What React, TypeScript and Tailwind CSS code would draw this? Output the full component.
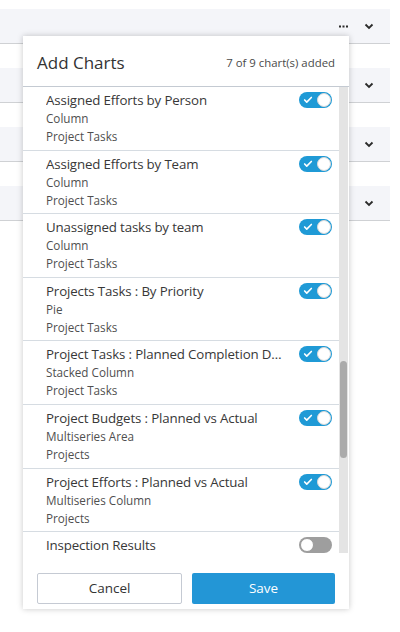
import { Check } from "lucide-react";

type ChartItem = {
  title: string;
  type?: string;
  source?: string;
  added: boolean;
};

const charts: ChartItem[] = [
  { title: "Assigned Efforts by Person", type: "Column", source: "Project Tasks", added: true },
  { title: "Assigned Efforts by Team", type: "Column", source: "Project Tasks", added: true },
  { title: "Unassigned tasks by team", type: "Column", source: "Project Tasks", added: true },
  { title: "Projects Tasks : By Priority", type: "Pie", source: "Project Tasks", added: true },
  { title: "Project Tasks : Planned Completion Date", type: "Stacked Column", source: "Project Tasks", added: true },
  { title: "Project Budgets : Planned vs Actual", type: "Multiseries Area", source: "Projects", added: true },
  { title: "Project Efforts : Planned vs Actual", type: "Multiseries Column", source: "Projects", added: true },
  { title: "Inspection Results", added: false },
];

function Chevron() {
  return (
    <svg width="10" height="7" viewBox="0 0 10 7" fill="none">
      <path d="M1.5 1.5 5 5l3.5-3.5" stroke="#2b2b2b" strokeWidth="1.8" />
    </svg>
  );
}

function Dots() {
  return (
    <svg width="9" height="3" viewBox="0 0 9 3">
      <rect x="0" y="0.5" width="2" height="2" fill="#2b2b2b" />
      <rect x="3.5" y="0.5" width="2" height="2" fill="#2b2b2b" />
      <rect x="7" y="0.5" width="2" height="2" fill="#2b2b2b" />
    </svg>
  );
}

function Toggle({ on }: { on: boolean }) {
  if (on) {
    return (
      <div className="relative w-[33px] h-[16px] rounded-full bg-[#1f9ad6] shrink-0">
        <Check
          size={10}
          strokeWidth={4}
          color="#ffffff"
          className="absolute left-[4px] top-[3px]"
        />
        <div className="absolute right-[1px] top-[1px] w-[14px] h-[14px] rounded-full bg-white border border-[#d8d8d8]" />
      </div>
    );
  }
  return (
    <div className="relative w-[33px] h-[16px] rounded-full bg-[#9e9e9e] shrink-0">
      <div className="absolute left-[1px] top-[1px] w-[14px] h-[14px] rounded-full bg-white border border-[#9a9a9a]" />
    </div>
  );
}

export default function App() {
  return (
    <div
      className="relative w-[400px] h-[632px] bg-white overflow-hidden"
      style={{ fontFamily: '"Open Sans", "Noto Sans", sans-serif' }}
    >
      {/* Background sections */}
      <div className="flex flex-col gap-[24px] pt-[9px]">
        {[0, 1, 2, 3].map((i) => (
          <div
            key={i}
            className="w-[390px] h-[35px] bg-[#f4f5f9] border-b border-[#cfd1d4] flex items-center justify-end pr-[16px] gap-[16px]"
          >
            {i === 0 && <Dots />}
            <Chevron />
          </div>
        ))}
      </div>

      {/* Add Charts popover */}
      <div className="absolute left-[23px] top-[36px] w-[326px] h-[573px] bg-white shadow-[0_0_6px_rgba(0,0,0,0.22)] flex flex-col">
        <div className="h-[51px] shrink-0 border-b border-[#c4cad2] flex items-center justify-between pl-[14px] pr-[14px] pt-[4px]">
          <span className="text-[17px] text-[#333333]">Add Charts</span>
          <span className="text-[11.4px] text-[#4a4a4a]">7 of 9 chart(s) added</span>
        </div>

        <div className="relative h-[466px] shrink-0 overflow-hidden flex">
          <div className="flex-1 min-w-0 flex flex-col">
            {charts.map((c, i) => (
              <div
                key={c.title}
                className={`flex justify-between pl-[23px] pr-[7px] pt-[4px] pb-[4.6px] ${
                  i < charts.length - 1 ? "border-b border-[#d6dce2]" : ""
                }`}
              >
                <div className="min-w-0 flex-1 pr-[12px]">
                  <div className="text-[13.3px] leading-[18px] text-[#383838] tracking-[-0.15px] truncate">
                    {c.title}
                  </div>
                  {c.type && (
                    <div className="text-[11.7px] leading-[18px] text-[#4f4f4f]">{c.type}</div>
                  )}
                  {c.source && (
                    <div className="text-[11.7px] leading-[18px] text-[#4f4f4f]">{c.source}</div>
                  )}
                </div>
                <div className="h-[18px] flex items-center">
                  <Toggle on={c.added} />
                </div>
              </div>
            ))}
          </div>
          {/* scrollbar */}
          <div className="w-[9px] shrink-0 bg-[#e4e4e4] mr-[1px] relative">
            <div className="absolute left-[1px] top-[274px] w-[7px] h-[97px] rounded-full bg-[#ababab]" />
          </div>
        </div>

        <div className="flex gap-[10px] px-[14px] pt-[20px]">
          <button className="flex-1 h-[31px] rounded-[2px] border border-[#c5cad3] bg-white text-[13.5px] text-[#333333]">
            Cancel
          </button>
          <button className="flex-1 h-[31px] rounded-[2px] bg-[#2396d6] text-[13.5px] text-white">
            Save
          </button>
        </div>
      </div>
    </div>
  );
}
